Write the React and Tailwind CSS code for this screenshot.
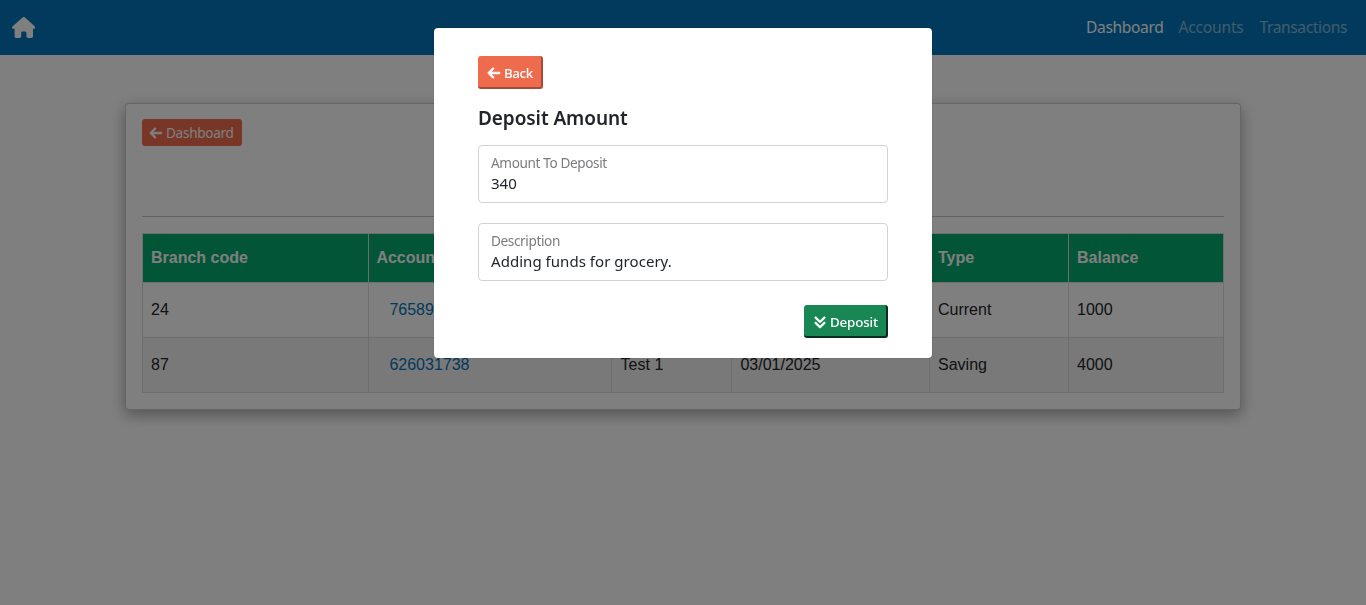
import { FaArrowLeft, FaAnglesDown, FaHouse } from "react-icons/fa6";

const ROWS = [
  ["24", "765891204", "Test 1", "03/01/2025", "Current", "1000"],
  ["87", "626031738", "Test 1", "03/01/2025", "Saving", "4000"],
];
const HEADERS = ["Branch code", "Account", "", "", "Type", "Balance"];
const CELL_PADDING = ["pl-2", "pl-[7.4px]", "pl-[8.6px]", "pl-[8.4px]", "pl-2", "pl-2"];

function Navbar() {
  return (
    <nav className="flex h-[55px] items-center justify-between bg-[#0275b8] pl-[11.5px] pr-5 text-white">
      <FaHouse className="h-[21px] w-[23.6px]" />
      <div className="flex gap-4 pb-px text-[15.6px] leading-6">
        <a className="w-[76.5px] whitespace-nowrap tracking-[-0.36px]">Dashboard</a>
        <a className="w-[65px] whitespace-nowrap tracking-[-0.2px] text-white/50">Accounts</a>
        <a className="w-[86.5px] whitespace-nowrap tracking-[-0.4px] text-white/50">Transactions</a>
      </div>
    </nav>
  );
}

function AccountsTable() {
  return (
    <table className="w-[1082px] table-fixed border-collapse font-['Liberation_Sans',Arial,sans-serif] text-base text-[#212529]">
      <colgroup>
        <col className="w-[226px]" />
        <col className="w-[243px]" />
        <col className="w-[120px]" />
        <col className="w-[198px]" />
        <col className="w-[139px]" />
        <col className="w-[155px]" />
      </colgroup>
      <thead>
        <tr className="h-[49px] bg-[#04aa6d] text-left text-white">
          {HEADERS.map((h, i) => (
            <th key={i} className={`border border-[#ddd] py-0 pr-2 font-bold ${CELL_PADDING[i]}`}>{h}</th>
          ))}
        </tr>
      </thead>
      <tbody>
        {ROWS.map((row) => (
          <tr key={row[0]} className="h-[55px] even:bg-[#f2f2f2]">
            {row.map((cell, i) => (
              <td key={i} className={`border border-[#ddd] py-0 pr-2 ${CELL_PADDING[i]}`}>
                {i === 1 ? <a className="pl-[13px] text-[#0275b8]">{cell}</a> : cell}
              </td>
            ))}
          </tr>
        ))}
      </tbody>
    </table>
  );
}

function Field({ label, value }) {
  return (
    <div className="mb-5 flex h-[58px] flex-col rounded border border-[#ced4da] px-3 pt-[7px]">
      <label className="h-5 text-[13.6px] leading-5 tracking-[-0.38px] text-[#7a7c7f]">{label}</label>
      <span className="text-[15px] leading-[21px] tracking-[0.04px] text-[#212529]">{value}</span>
    </div>
  );
}

function DepositModal() {
  return (
    <div className="fixed inset-0 flex items-start justify-center bg-black/50 pt-7">
      <div className="h-[330px] w-[498px] rounded bg-white px-11 pt-7 shadow-[0_0_1px_rgba(0,0,0,0.5)]">
        <button className="flex h-[33px] w-[65px] items-center gap-[3px] rounded-[3px] border-b-2 border-r-2 border-[#a94a35] bg-[#ee6c4d] pl-[9px] pt-[2px] text-[13.4px] font-medium tracking-[-0.45px] text-white">
          <FaArrowLeft className="size-[14px] stroke-current [stroke-width:26]" />
          <span className="pt-[2px]">Back</span>
        </button>
        <h5 className="mb-[15px] mt-[17px] whitespace-nowrap text-[19px] font-semibold leading-6 tracking-[-0.08px] text-[#212529]">
          Deposit Amount
        </h5>
        <Field label="Amount To Deposit" value="340" />
        <Field label="Description" value="Adding funds for grocery." />
        <div className="mt-6 flex justify-end">
          <button className="flex h-[33px] w-[84px] items-center gap-[3px] rounded-[3px] border-b-2 border-r-2 border-[#0a2e1c] bg-[#198754] pl-[9px] pt-[2px] text-[13.4px] font-medium tracking-[-0.2px] text-white">
            <FaAnglesDown className="size-[14px] stroke-current [stroke-width:26]" />
            <span className="pt-[2px]">Deposit</span>
          </button>
        </div>
      </div>
    </div>
  );
}

export default function App() {
  return (
    <div className="h-[605px] overflow-hidden bg-white font-['Noto_Sans','Open_Sans',sans-serif]">
      <Navbar />
      <main className="mx-auto mt-12 h-[307px] w-[1116px] rounded border border-black/20 bg-white px-4 pt-[15px] shadow-[0_5px_15px_rgba(0,0,0,0.35)]">
        <a className="flex h-[27px] w-[100px] items-center gap-[3px] rounded-[3px] bg-[#ee6c4d] pl-[7px] text-[13.6px] tracking-[-0.3px] text-white">
          <FaArrowLeft className="size-[14px] stroke-current [stroke-width:26]" />
          <span className="pt-[2px]">Dashboard</span>
        </a>
        <hr className="mb-4 mt-[70px] border-t border-[#c4c5c6]" />
        <AccountsTable />
      </main>
      <DepositModal />
    </div>
  );
}
